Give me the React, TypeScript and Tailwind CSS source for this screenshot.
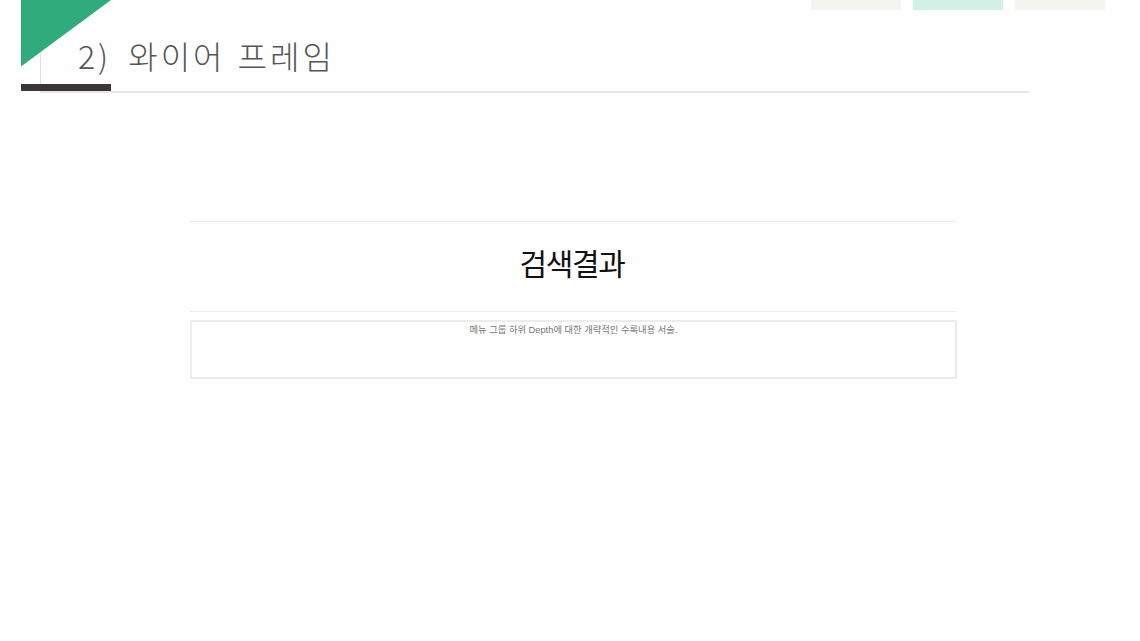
export default function App() {
  return (
    <div className="flex h-[641px] w-[1140px] flex-col overflow-hidden bg-[#fefefe] antialiased font-['Liberation_Sans','Noto_Sans_CJK_KR',sans-serif]">
      <header className="relative h-[93px] shrink-0">
        <svg className="absolute left-[21px] top-0 z-10" width="90" height="67" viewBox="0 0 90 67">
          <polygon points="0,0 90,0 0,66.5" fill="#30ab7c" />
        </svg>
        <div className="ml-[811px] flex gap-[12.5px]">
          <div className="h-[10px] w-[89.5px] bg-[#f6f4ef]" />
          <div className="h-[10px] w-[89.5px] bg-[#d2f0e5]" />
          <div className="h-[10px] w-[89.5px] bg-[#f6f4ef]" />
        </div>
        <div className="ml-[40px] mt-[29px] h-[52px] w-[989px] border-l border-[#e2e2e2] pl-[37px] pt-[1px]">
          <h1 className="flex gap-[10px] whitespace-pre text-[32px] font-light leading-[30px] tracking-[3px] text-[#555555] font-['Noto_Sans_CJK_KR',sans-serif]">
            <span className="mr-[7px]">2)</span>
            <span>와이어</span>
            <span className="ml-[2px]">프레임</span>
          </h1>
        </div>
        <div className="absolute left-[21px] top-[84px] h-[7px] w-[90px] bg-[#3b3536]" />
        <div className="absolute left-[40px] top-[91px] h-[2px] w-[989px] bg-[#e6e6e6]" />
      </header>
      <main className="ml-[190px] mt-[128px] w-[767px]">
        <div className="flex h-[91px] w-[766px] items-center justify-center border-y border-[#ebebeb] pb-[9px] pr-[2px]">
          <h2 className="text-[30px] font-normal leading-none tracking-[-1.4px] text-[#111111] font-['Noto_Sans_CJK_KR',sans-serif]">
            검색결과
          </h2>
        </div>
        <div className="mt-[8px] h-[59px] border-2 border-[#ececec] pt-[1px] text-center">
          <p className="text-[9.3px] leading-[14px] text-[#777777] font-['Liberation_Sans','Noto_Sans_CJK_KR',sans-serif]">
            메뉴 그룹 하위 Depth에 대한 개략적인 수록내용 서술.
          </p>
        </div>
      </main>
    </div>
  );
}
